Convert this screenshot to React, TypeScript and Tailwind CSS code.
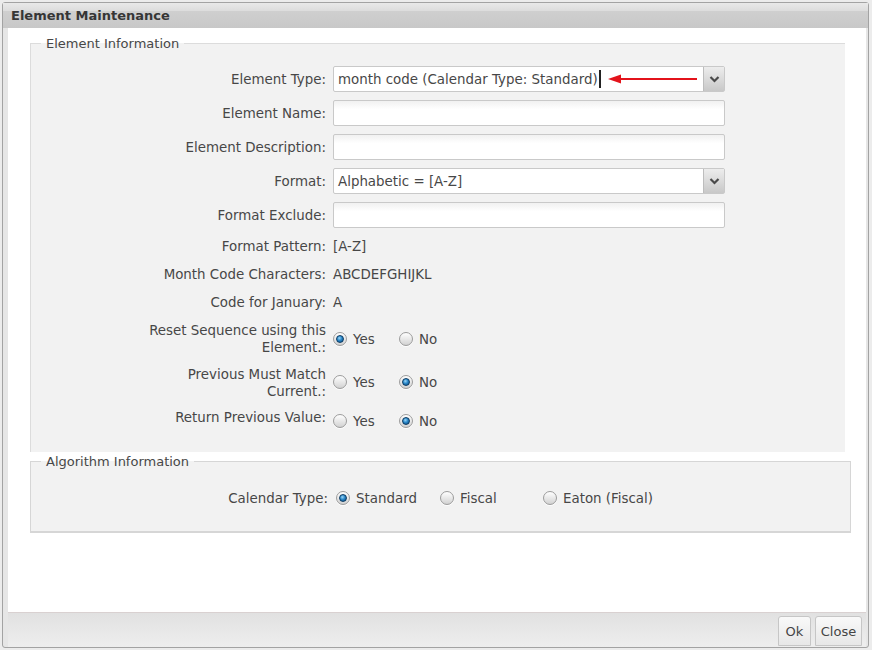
import React from 'react';

function Radio({ checked }: { checked?: boolean }) {
  return (
    <span className="inline-flex h-[14px] w-[14px] shrink-0 items-center justify-center rounded-full border border-[#9c9c9c] bg-[linear-gradient(#ffffff,#d2d2d2)] shadow-[0_1px_0_rgba(255,255,255,0.8)]">
      {checked && (
        <span className="h-[8px] w-[8px] rounded-full border border-[#0c3b63] bg-[radial-gradient(circle_at_40%_35%,#9ad6f7_0%,#2b88c9_45%,#0b4a80_100%)]" />
      )}
    </span>
  );
}

function RadioOption({ label, checked, width }: { label: string; checked?: boolean; width: string }) {
  return (
    <label className={`flex items-center gap-[6px] ${width}`}>
      <Radio checked={checked} />
      <span className="pt-[1px]">{label}</span>
    </label>
  );
}

function Chevron() {
  return (
    <svg width="11" height="8" viewBox="0 0 11 8">
      <path d="M1.5 2 L5.5 6 L9.5 2" fill="none" stroke="#4a4a4a" strokeWidth="2.2" />
    </svg>
  );
}

function Select({ value, children }: { value: string; children?: React.ReactNode }) {
  return (
    <div className="flex h-[26px] w-[392px] rounded-[2px] border border-[#c9c9c9] bg-white">
      <div className="flex flex-1 items-center pl-[4px] whitespace-nowrap">
        {value}
        {children}
      </div>
      <div className="flex w-[21px] items-center justify-center border-l border-[#bdbdbd] bg-[linear-gradient(#ededed,#c8c8c8)]">
        <Chevron />
      </div>
    </div>
  );
}

function TextInput() {
  return (
    <div className="h-[26px] w-[392px] rounded-[2px] border border-[#c9c9c9] bg-[linear-gradient(#f1f1f1,#ffffff_35%)]" />
  );
}

function Row({ label, children, tall }: { label: string; children: React.ReactNode; tall?: boolean }) {
  return (
    <div className={`flex items-center gap-[7px] ${tall ? 'h-[34px]' : 'py-[5.5px] min-h-[28px]'}`}>
      <div className="w-[295px] shrink-0 pl-[107px] text-right">{label}</div>
      {children}
    </div>
  );
}

export default function App() {
  return (
    <div className="h-[650px] w-[872px] bg-[#ececec] p-[2px] font-['DejaVu_Sans',sans-serif] text-[13.4px] leading-[17px] text-[#474747]">
      <div className="flex h-[646px] w-[867px] flex-col rounded-[3px] border border-[#a3a3a3] bg-[#e6e6e6]">
        <div className="flex h-[25px] items-center bg-[linear-gradient(#e9e9e9_0%,#dddddd_30%,#cfcfcf_34%,#c8c8c8_100%)] px-[8px] text-[13px] font-bold text-[#363636]">
          Element Maintenance
        </div>

        <div className="ml-[5px] mr-[2px] flex-1 bg-white pl-[22px] pr-[15px] pt-[7px]">
          <fieldset className="mr-[6px] border-l border-t border-[#dcdcdc] bg-[#f2f2f2] pb-[22px] pt-[10px]">
            <legend className="ml-[10px] px-[5px] text-[13px]">Element Information</legend>

            <Row label="Element Type:" tall>
              <Select value="month code (Calendar Type: Standard)">
                <span className="ml-[1px] h-[18px] w-[2px] bg-[#222]" />
                <svg width="90" height="10" viewBox="0 0 90 10" className="ml-[7px]">
                  <path d="M12 5 H89" stroke="#e3131b" strokeWidth="2" />
                  <polygon points="0,5 13,0.5 13,9.5" fill="#e3131b" />
                </svg>
              </Select>
            </Row>
            <Row label="Element Name:" tall>
              <TextInput />
            </Row>
            <Row label="Element Description:" tall>
              <TextInput />
            </Row>
            <Row label="Format:" tall>
              <Select value="Alphabetic = [A-Z]" />
            </Row>
            <Row label="Format Exclude:" tall>
              <TextInput />
            </Row>

            <Row label="Format Pattern:">
              <span>[A-Z]</span>
            </Row>
            <Row label="Month Code Characters:">
              <span>ABCDEFGHIJKL</span>
            </Row>
            <Row label="Code for January:">
              <span>A</span>
            </Row>
            <Row label="Reset Sequence using this Element.:">
              <div className="flex">
                <RadioOption label="Yes" checked width="w-[66px]" />
                <RadioOption label="No" width="w-[60px]" />
              </div>
            </Row>
            <div className="-mt-[1px]">
              <Row label="Previous Must Match Current.:">
                <div className="flex pb-[1px]">
                  <RadioOption label="Yes" width="w-[66px]" />
                  <RadioOption label="No" checked width="w-[60px]" />
                </div>
              </Row>
            </div>
            <div className="flex items-start gap-[7px] pt-[4px]">
              <div className="w-[295px] shrink-0 pl-[107px] text-right">Return Previous Value:</div>
              <div className="flex pt-[3px]">
                <RadioOption label="Yes" width="w-[66px]" />
                <RadioOption label="No" checked width="w-[60px]" />
              </div>
            </div>
          </fieldset>

          <fieldset className="mt-[1px] border border-b-2 border-[#d6d6d6] bg-[#f2f2f2] pb-[19px] pt-[14px]">
            <legend className="ml-[10px] px-[5px] text-[13px]">Algorithm Information</legend>
            <div className="flex h-[28px] items-center gap-[8px]">
              <div className="w-[297px] shrink-0 text-right">Calendar Type:</div>
              <div className="flex">
                <RadioOption label="Standard" checked width="w-[104px]" />
                <RadioOption label="Fiscal" width="w-[103px]" />
                <RadioOption label="Eaton (Fiscal)" width="w-[120px]" />
              </div>
            </div>
          </fieldset>
        </div>

        <div className="ml-[5px] mr-[2px] flex h-[35px] items-end justify-end gap-[4px] border-t border-[#d9d1d1] bg-[linear-gradient(#e1e1e1,#eeeeee)] pb-[1px] pr-[4px]">
          <button className="flex h-[30px] w-[33px] items-center justify-center rounded-t-[3px] border border-[#c6c6c6] bg-[linear-gradient(#f9f9f9,#e7e7e7)] text-[13px] text-[#444]">
            Ok
          </button>
          <button className="flex h-[30px] w-[47px] items-center justify-center rounded-t-[3px] border border-[#c6c6c6] bg-[linear-gradient(#f9f9f9,#e7e7e7)] text-[13px] text-[#444]">
            Close
          </button>
        </div>
      </div>
    </div>
  );
}
